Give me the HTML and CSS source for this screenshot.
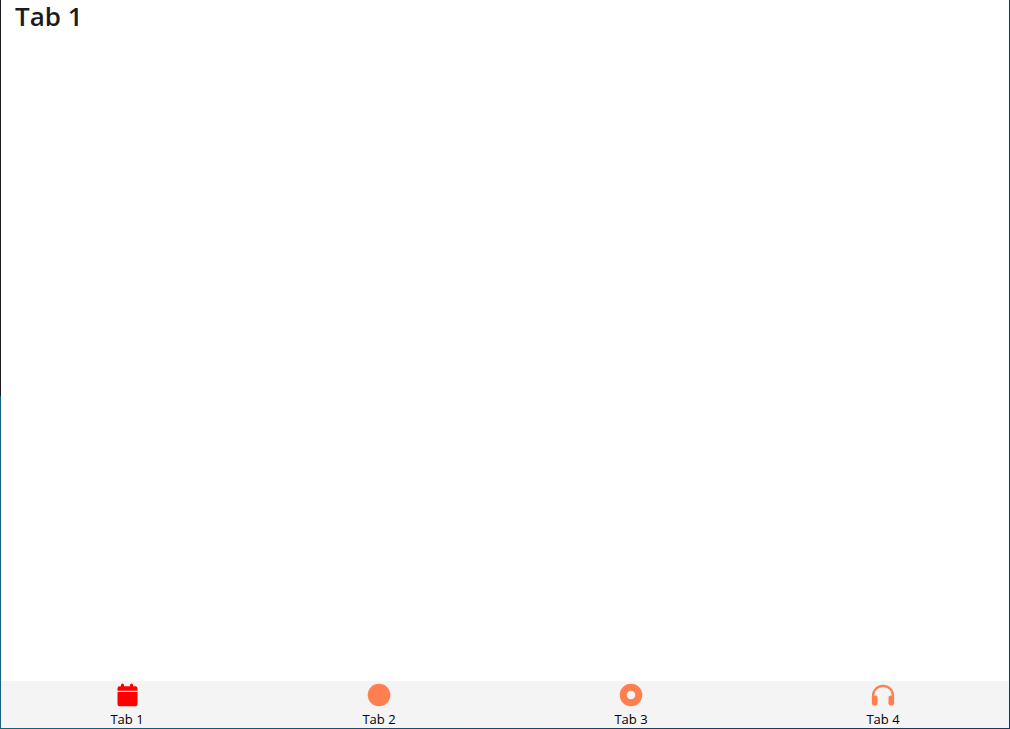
FILE: index.html
```html
<!DOCTYPE html>
<html lang="en">
<head>
<meta charset="utf-8">
<title>Tab 1</title>
<link rel="stylesheet" href="styles.css">
</head>
<body>
<div class="window">
  <main class="content">
    <h1 class="title">Tab 1</h1>
  </main>
  <nav class="tabs">
    <button class="tab tab-active" type="button" aria-current="page">
      <svg class="icon" viewBox="0 0 24 24" aria-hidden="true"><path d="M2.500 7.800V5.400a2.200 2.200 0 0 1 2.200-2.200h1.300V1.900a1.500 1.500 0 0 1 3 0v1.300h6V1.900a1.500 1.500 0 0 1 3 0v1.300h2.300a2.200 2.200 0 0 1 2.200 2.200v2.400zM2.500 9h20v12.200a2 2 0 0 1-2 2h-16a2 2 0 0 1-2-2z"/></svg>
      <span>Tab 1</span>
    </button>
    <button class="tab" type="button">
      <svg class="icon" viewBox="0 0 24 24" aria-hidden="true"><circle cx="12" cy="12" r="11.300"/></svg>
      <span>Tab 2</span>
    </button>
    <button class="tab" type="button">
      <svg class="icon" viewBox="0 0 24 24" aria-hidden="true"><path fill-rule="evenodd" d="M12 .7a11.300 11.300 0 1 1 0 22.600 11.300 11.300 0 0 1 0-22.600zm0 7a4.300 4.300 0 1 0 0 8.600 4.300 4.300 0 0 0 0-8.600z"/></svg>
      <span>Tab 3</span>
    </button>
    <button class="tab" type="button">
      <svg class="icon" viewBox="0 0 24 24" aria-hidden="true"><path d="M2 17v-4.200a10 10 0 0 1 20 0V17" fill="none" stroke="currentColor" stroke-width="2.200"/><rect x=".9" y="12.500" width="5.600" height="10" rx="2"/><rect x="17.500" y="12.500" width="5.600" height="10" rx="2"/></svg>
      <span>Tab 4</span>
    </button>
  </nav>
</div>
</body>
</html>
```
FILE: styles.css
```css
* {
  box-sizing: border-box;
}

body {
  margin: 0;
  padding: 0 1px 1px;
  min-height: 100vh;
  display: flex;
  background:
    linear-gradient(#1c1a1c 396px, #17607f 396px) left / 1px 100% no-repeat,
    linear-gradient(90deg, #17607f, #173a63 80%);
  font-family: "Segoe UI", "Open Sans", "Noto Sans", sans-serif;
}

.window {
  flex: 1;
  display: flex;
  flex-direction: column;
  background: #fff;
}

.content {
  flex: 1;
  padding: 0 14px;
}

.title {
  margin: 0;
  font-size: 26px;
  font-weight: 600;
  line-height: 32px;
  color: #1b1b1b;
}

.tabs {
  display: grid;
  grid-template-columns: repeat(4, 1fr);
  background: #f4f4f4;
}

.tab {
  display: flex;
  flex-direction: column;
  align-items: center;
  gap: 4px;
  padding: 2px 0 1px;
  border: 0;
  background: none;
  color: #ff7f50;
  font-family: inherit;
  font-size: 13px;
  line-height: 16px;
}

.tab span {
  color: #000;
}

.tab-active {
  color: #f00;
}

.icon {
  width: 24px;
  height: 24px;
  fill: currentColor;
}
```
